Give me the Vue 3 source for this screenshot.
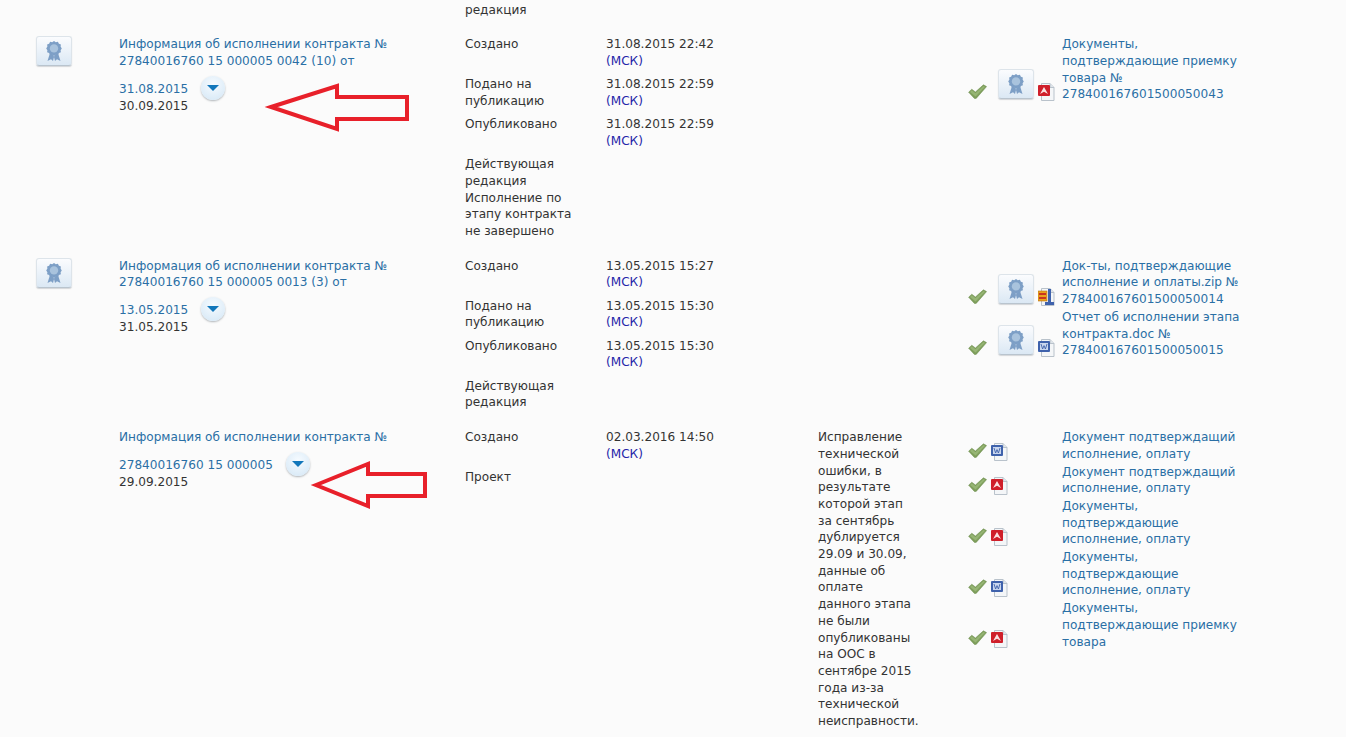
<script setup>
const rows = [
  {
    title: 'Информация об исполнении контракта № 27840016760 15 000005 0042 (10) от',
    link: '31.08.2015',
    date: '30.09.2015',
    seal: true,
    events: [
      { label: 'Создано', time: '31.08.2015 22:42' },
      { label: 'Подано на публикацию', time: '31.08.2015 22:59' },
      { label: 'Опубликовано', time: '31.08.2015 22:59' },
    ],
    status: ['Действующая редакция', 'Исполнение по этапу контракта не завершено'],
    note: '',
    docs: [
      { type: 'pdf', seal: true, text: 'Документы, подтверждающие приемку товара № 278400167601500050043' },
    ],
  },
  {
    title: 'Информация об исполнении контракта № 27840016760 15 000005 0013 (3) от',
    link: '13.05.2015',
    date: '31.05.2015',
    seal: true,
    events: [
      { label: 'Создано', time: '13.05.2015 15:27' },
      { label: 'Подано на публикацию', time: '13.05.2015 15:30' },
      { label: 'Опубликовано', time: '13.05.2015 15:30' },
    ],
    status: ['Действующая редакция'],
    note: '',
    docs: [
      { type: 'zip', seal: true, text: 'Док-ты, подтверждающие исполнение и оплаты.zip № 278400167601500050014' },
      { type: 'doc', seal: true, text: 'Отчет об исполнении этапа контракта.doc № 278400167601500050015' },
    ],
  },
  {
    title: 'Информация об исполнении контракта №',
    link: '27840016760 15 000005',
    date: '29.09.2015',
    seal: false,
    events: [{ label: 'Создано', time: '02.03.2016 14:50' }],
    status: ['Проект'],
    // line breaks as in the original column
    note: 'Исправление\nтехнической\nошибки, в\nрезультате\nкоторой этап\nза сентябрь\nдублируется\n29.09 и 30.09,\nданные об\nоплате\nданного этапа\nне были\nопубликованы\nна ООС в\nсентябре 2015\nгода из-за\nтехнической\nнеисправности.',
    docs: [
      { type: 'doc', seal: false, text: 'Документ подтверждащий исполнение, оплату' },
      { type: 'pdf', seal: false, text: 'Документ подтверждащий исполнение, оплату' },
      { type: 'pdf', seal: false, text: 'Документы, подтверждающие исполнение, оплату' },
      { type: 'doc', seal: false, text: 'Документы, подтверждающие исполнение, оплату' },
      { type: 'pdf', seal: false, text: 'Документы, подтверждающие приемку товара' },
    ],
  },
]
</script>

<template>
  <div class="page">
    <div class="tail">редакция</div>

    <div v-for="row in rows" :key="row.title" class="row">
      <div class="cell-seal">
        <span v-if="row.seal" class="seal-btn">
          <svg width="18" height="22" viewBox="0 0 18 22">
            <path d="M5 13L2.5 21L6 19.2L8 21L9.5 15ZM13 13L15.5 21L12 19.2L10 21L8.5 15Z" fill="#7d9fc6" />
            <path d="M9 1l1.8 1.2 2.1-.4 1 1.9 2 .8-.3 2.1 1.2 1.8-1.2 1.8.3 2.1-2 .8-1 1.9-2.1-.4L9 15.8l-1.8-1.2-2.1.4-1-1.9-2-.8.3-2.1L1.2 8.4l1.2-1.8-.3-2.1 2-.8 1-1.9 2.1.4z" fill="#7d9fc6" />
            <circle cx="9" cy="8.4" r="4.2" fill="#a9c3dd" />
          </svg>
        </span>
      </div>

      <div class="cell-title">
        <a class="link">{{ row.title }}</a>
        <div class="date-line">
          <a class="link">{{ row.link }}</a>
          <span class="round-btn"><i></i></span>
        </div>
        <div class="date">{{ row.date }}</div>
      </div>

      <div class="cell-events">
        <div class="events">
          <template v-for="ev in row.events" :key="ev.label">
            <div>{{ ev.label }}</div>
            <div>{{ ev.time }}<br><span class="tz">(МСК)</span></div>
          </template>
        </div>
        <div class="status">
          <div v-for="s in row.status" :key="s">{{ s }}</div>
        </div>
      </div>

      <div class="cell-note">{{ row.note }}</div>

      <div class="cell-docs">
        <div v-for="(doc, i) in row.docs" :key="i" class="doc">
          <div class="doc-icons" :class="{ small: !doc.seal }">
            <svg class="check" width="19" height="15" viewBox="0 0 19 15">
              <path d="M.6 8.2L3.8 5.2L7.4 8L15.4 .8L18.6 2.6L8.2 14.4H6.4Z" fill="#7f9f5c" stroke="#6b8c4d" stroke-width=".5" />
              <path d="M2 8L3.9 6.3L7.4 9.2L15.5 2L17 2.8L7.6 12.6Z" fill="#96b574" />
            </svg>
            <span v-if="doc.seal" class="seal-btn">
              <svg width="18" height="22" viewBox="0 0 18 22">
                <path d="M5 13L2.5 21L6 19.2L8 21L9.5 15ZM13 13L15.5 21L12 19.2L10 21L8.5 15Z" fill="#7d9fc6" />
                <path d="M9 1l1.8 1.2 2.1-.4 1 1.9 2 .8-.3 2.1 1.2 1.8-1.2 1.8.3 2.1-2 .8-1 1.9-2.1-.4L9 15.8l-1.8-1.2-2.1.4-1-1.9-2-.8.3-2.1L1.2 8.4l1.2-1.8-.3-2.1 2-.8 1-1.9 2.1.4z" fill="#7d9fc6" />
                <circle cx="9" cy="8.4" r="4.2" fill="#a9c3dd" />
              </svg>
            </span>
            <svg class="file" width="17" height="18" viewBox="0 0 17 18">
              <path d="M3.5 .5H12L16 4.5V17.5H3.5Z" fill="#f4f6f8" stroke="#b9c2cb" />
              <path d="M12 .5V4.5H16" fill="#dfe5ea" stroke="#b9c2cb" />
              <template v-if="doc.type === 'pdf'">
                <rect x="0" y="2" width="12" height="11" rx="1" fill="#cf1f2a" />
                <path d="M2 11L6 4L10 11L6 8.8Z" fill="#fbe3e3" />
              </template>
              <template v-else-if="doc.type === 'doc'">
                <rect x="0" y="2" width="12" height="11" rx="1" fill="#3f62ac" />
                <rect x="2" y="4" width="8" height="7" fill="#c9d6ee" />
                <path d="M3 5L4.6 10L6 6.6L7.4 10L9 5" fill="none" stroke="#3f62ac" stroke-width=".9" />
              </template>
              <template v-else>
                <rect x="0" y="3" width="9" height="10" fill="#e9a21d" stroke="#b9741a" stroke-width=".6" />
                <rect x="1" y="5" width="7" height="2" fill="#c9341f" />
                <rect x="1" y="9" width="7" height="2" fill="#c9341f" />
                <rect x="10" y="1" width="3" height="16" fill="#3f62ac" />
                <rect x="7" y="14" width="9" height="3" fill="#3f62ac" />
              </template>
            </svg>
          </div>
          <a class="link doc-link">{{ doc.text }}</a>
        </div>
      </div>
    </div>

    <svg class="arrows" width="1346" height="737" viewBox="0 0 1346 737">
      <path d="M271 107L337 86V97H407V119H337V129Z" />
      <path d="M316 485L368 464V474H425V496H368V506Z" />
    </svg>
  </div>
</template>

<style>
html, body {
  background: #fbfbfb;
}
</style>

<style scoped>
.page {
  position: relative;
  height: 737px;
  overflow: hidden;
  padding-top: 1.5px;
  box-sizing: border-box;
  background: #fbfbfb;
  color: #333;
  font-family: "DejaVu Sans", Verdana, sans-serif;
  font-size: 12.1px;
  line-height: 16.7px;
}
.tail {
  margin-left: 465px;
  margin-bottom: 18px;
}
.row {
  display: grid;
  grid-template-columns: 83px 346px 353px 150px 378px;
  padding-left: 36px;
  padding-bottom: 18px;
}
.link {
  color: #2a6fa5;
}
.seal-btn {
  display: flex;
  align-items: center;
  justify-content: center;
  width: 36px;
  height: 30px;
  box-sizing: border-box;
  border: 1px solid #dde4ea;
  border-bottom-color: #b9c4ce;
  border-radius: 3px;
  background: linear-gradient(#fbfcfe, #dbe8f4);
  box-shadow: 0 1px 1px rgba(90, 100, 110, .25);
}
.cell-title {
  padding-right: 70px;
}
.date-line {
  display: flex;
  align-items: center;
  height: 17px;
  margin-top: 11px;
}
.round-btn {
  display: flex;
  align-items: center;
  justify-content: center;
  width: 24px;
  height: 24px;
  margin-left: 13px;
  margin-top: -3px;
  border-radius: 50%;
  background: radial-gradient(circle at 50% 35%, #f6fbff, #d3e6f5);
  box-shadow: 0 1px 2px rgba(80, 90, 100, .45);
}
.round-btn i {
  width: 0;
  height: 0;
  border-left: 6px solid transparent;
  border-right: 6px solid transparent;
  border-top: 6px solid #1277bb;
}
.events {
  display: grid;
  grid-template-columns: 112px 140px;
  column-gap: 29px;
  row-gap: 6.6px;
}
.tz {
  color: #2424a8;
}
.status {
  width: 112px;
  margin-top: 6.6px;
}
.cell-note {
  white-space: pre-line;
}
.doc {
  display: flex;
  padding-bottom: 1px;
}
.doc-icons {
  display: flex;
  align-items: flex-end;
  width: 94px;
  flex: none;
  padding-bottom: 4px;
  box-sizing: border-box;
}
.doc-icons .seal-btn {
  margin-left: 11px;
}
.doc-icons .file {
  margin-left: 4px;
  margin-bottom: -2px;
}
.doc-icons.small {
  padding-bottom: 5px;
}
.doc-icons.small .file {
  margin-left: 4px;
  margin-bottom: -3px;
}
.doc-link {
  width: 182px;
}
.arrows {
  position: absolute;
  left: 0;
  top: 0;
  pointer-events: none;
}
.arrows path {
  fill: none;
  stroke: #e8202a;
  stroke-width: 4;
}
</style>
